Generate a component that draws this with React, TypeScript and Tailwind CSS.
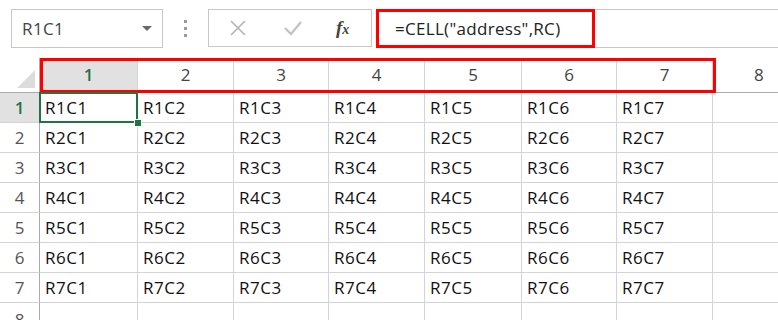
import React from 'react';

const cols = [98, 96, 95, 96, 97, 95, 96];
const gridCols = 'grid grid-cols-[40px_98px_96px_95px_96px_97px_95px_96px_1fr]';
const rows = [1, 2, 3, 4, 5, 6, 7];

const XIcon = () => (
  <svg width="18" height="18" viewBox="0 0 18 18">
    <path d="M2 2 L16 16 M16 2 L2 16" stroke="#b4b4b4" strokeWidth="1.6" fill="none" />
  </svg>
);

const CheckIcon = () => (
  <svg width="20" height="18" viewBox="0 0 20 18">
    <path d="M2 9 L8 15 L18 3" stroke="#c4c4c4" strokeWidth="2.4" fill="none" />
  </svg>
);

export default function App() {
  return (
    <div className="w-[778px] h-[320px] overflow-hidden bg-white font-['Open_Sans','Noto_Sans',sans-serif] text-[#222]">
      {/* formula bar */}
      <div className="flex items-start h-[58px] pt-[9px]">
        <div className="ml-[11px] w-[152px] h-[39px] border border-[#c8c8c8] flex items-center justify-between pl-[10px] pr-[10px]">
          <span className="text-[17px] text-[#444] tracking-[0.4px]">R1C1</span>
          <span className="w-0 h-0 border-l-[5px] border-r-[5px] border-t-[5px] border-l-transparent border-r-transparent border-t-[#6a6a6a]" />
        </div>
        <div className="w-[45px] h-[39px] flex flex-col items-center justify-center gap-[4px]">
          <span className="w-[3px] h-[3px] bg-[#9a9a9a]" />
          <span className="w-[3px] h-[3px] bg-[#9a9a9a]" />
          <span className="w-[3px] h-[3px] bg-[#9a9a9a]" />
        </div>
        <div className="w-[164px] h-[38px] border border-[#c8c8c8] flex items-center pl-[20px] gap-[36px]">
          <XIcon />
          <CheckIcon />
          <span className="font-['Liberation_Serif',serif] italic font-bold text-[19px] text-[#444] -ml-[3px]">
            f<span className="text-[14px]">x</span>
          </span>
        </div>
        <div className="ml-[4px] flex-1 h-[39px] border-y border-[#c8c8c8] flex">
          <div className="w-[219px] h-[39px] -mt-px border-[3px] border-[#ff0000] flex items-center pl-[16px] text-[17px] text-[#222] tracking-[0.3px]">
            =CELL("address",RC)
          </div>
        </div>
      </div>

      {/* column headers */}
      <div className={`${gridCols} relative h-[35px] border-b border-[#ababab]`}>
        <div className="border-r border-[#ababab] relative">
          <svg className="absolute right-[4px] bottom-[4px]" width="18" height="18" viewBox="0 0 18 18">
            <polygon points="18,0 18,18 0,18" fill="#dcdcdc" />
          </svg>
        </div>
        {cols.map((_, i) => (
          <div
            key={i}
            className={`flex items-center justify-center text-[17px] border-r border-[#d4d4d4] ${
              i === 0 ? 'bg-[#e1e1e1] text-[#217346] font-semibold' : 'text-[#444]'
            }`}
          >
            {i + 1}
          </div>
        ))}
        <div className="flex items-center pl-[41px] text-[17px] text-[#444]">8</div>
        <div className="absolute left-[40px] top-0 w-[676px] h-[35px] border-[3px] border-[#ff0000]" />
      </div>

      {/* rows */}
      {[...rows, 8].map((r) => (
        <div key={r} className={`${gridCols} h-[30px]`}>
          <div
            className={`flex justify-center text-[17px] border-r border-b ${
              r === 1
                ? 'bg-[#e1e1e1] text-[#217346] font-semibold border-r-[#217346] border-b-[#d4d4d4]'
                : 'text-[#555] border-[#d4d4d4] border-r-[#ababab]'
            } ${r === 8 ? 'items-start pt-[4px]' : 'items-center'}`}
          >
            {r}
          </div>
          {cols.map((_, c) => (
            <div
              key={c}
              className="relative flex items-center pl-[5px] text-[17px] text-[#111] tracking-[0.5px] border-r border-b border-[#d4d4d4]"
            >
              {r <= 7 ? `R${r}C${c + 1}` : ''}
              {r === 1 && c === 0 && (
                <>
                  <div className="absolute -left-px -top-px -right-px -bottom-px border-2 border-[#217346]" />
                  <div className="absolute z-10 -right-[5px] -bottom-[5px] w-[8px] h-[8px] bg-[#217346] border border-white" />
                </>
              )}
            </div>
          ))}
          <div className="border-b border-[#d4d4d4]" />
        </div>
      ))}
    </div>
  );
}
